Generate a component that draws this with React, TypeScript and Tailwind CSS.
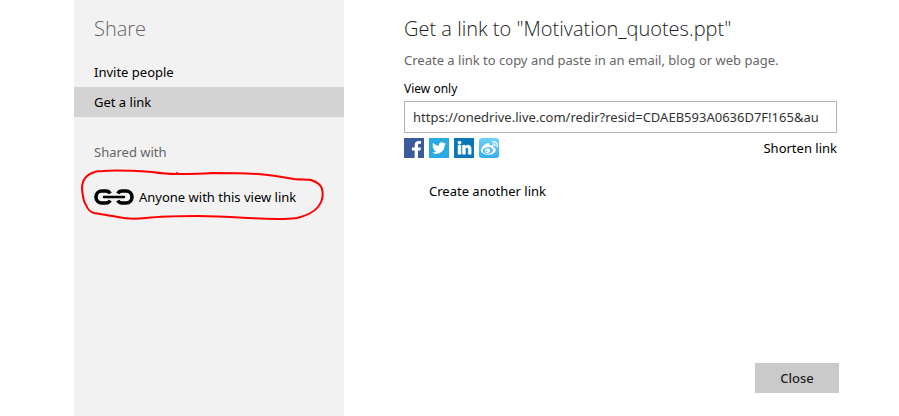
import { useState } from "react";
import { FaFacebookF, FaLinkedinIn, FaTwitter, FaWeibo } from "react-icons/fa";

const shareTargets = [
  { name: "Facebook", icon: FaFacebookF, box: "bg-[#3b5a9a] items-end justify-end pr-[2px]", glyph: "h-[17px] w-[11px]" },
  { name: "Twitter", icon: FaTwitter, box: "bg-[#2ba9e1] items-center justify-center", glyph: "size-[14px]" },
  { name: "LinkedIn", icon: FaLinkedinIn, box: "bg-[#0a76b5] items-center justify-center", glyph: "size-[15px] stroke-white stroke-[24px]" },
  { name: "Weibo", icon: FaWeibo, box: "rounded-[3px] bg-linear-to-b from-[#6fd0fb] to-[#32aef0] items-center justify-center", glyph: "size-[17px]" },
];

const menuItems = ["Invite people", "Get a link"];

export default function App() {
  const [active, setActive] = useState("Get a link");
  const [url, setUrl] = useState("https://onedrive.live.com/redir?resid=CDAEB593A0636D7F!165&authkey=!AJ7");

  return (
    <div className="flex min-h-screen bg-white pl-[74px] pr-[60px] font-['Noto_Sans',sans-serif] text-[13px] leading-5 text-black">
      <aside className="w-[270px] shrink-0 bg-[#f2f2f2]">
        <h2 className="px-5 pb-[13px] pt-[14px] font-['Open_Sans',sans-serif] text-xl leading-[30px] font-light text-[#666]">Share</h2>
        <nav>
          {menuItems.map((item) => (
            <button
              key={item}
              onClick={() => setActive(item)}
              className={`block h-[30px] w-full px-5 text-left ${active === item ? "bg-[#d3d3d3]" : ""}`}
            >
              {item}
            </button>
          ))}
        </nav>
        <h3 className="mt-[25px] px-5 text-[#666]">Shared with</h3>
        <div className="relative mx-5 mt-5 flex h-[30px] items-center">
          <a href="#view-link" className="flex items-center gap-[5px]">
            <ChainIcon />
            Anyone with this view link
          </a>
          <HandDrawnLoop />
        </div>
      </aside>

      <main className="flex min-w-0 flex-1 flex-col pl-[60px]">
        <h1 className="pt-[14px] font-['Open_Sans',sans-serif] text-xl leading-[30px] font-light text-[#222]">Get a link to "Motivation_quotes.ppt"</h1>
        <p className="mt-[6px] text-[#666]">Create a link to copy and paste in an email, blog or web page.</p>
        <div className="mr-[2px]">
          <label htmlFor="share-url" className="mt-[9px] block text-xs leading-5">View only</label>
          <input
            id="share-url"
            type="text"
            value={url}
            onChange={(e) => setUrl(e.target.value)}
            className="mt-[2px] block h-8 w-full border border-[#b4b4b4] bg-white pl-2 pr-[18px] text-[#333] outline-none"
          />
          <div className="mt-[5px] flex items-center justify-between">
            <div className="flex gap-[5px]">
              {shareTargets.map(({ name, icon: Icon, box, glyph }) => (
                <button key={name} aria-label={name} className={`flex size-5 text-white ${box}`}>
                  <Icon className={glyph} />
                </button>
              ))}
            </div>
            <button>Shorten link</button>
          </div>
        </div>
        <button className="ml-[25px] mt-[23px] self-start">Create another link</button>
        <button className="mb-[23px] mt-auto h-[30px] w-[84px] self-end bg-[#cacaca] font-medium text-[#222]">Close</button>
      </main>
    </div>
  );
}

function ChainIcon() {
  return (
    <svg viewBox="0 0 40 16" className="h-4 w-10 shrink-0" fill="none" stroke="#000" strokeWidth="3.6" aria-hidden="true">
      <path d="M16.200 4.500C15.200 2.700 14 2 12 2H8C4.500 2 2 4.700 2 8s2.500 6 6 6h4c2 0 3.200-.7 4.200-2.500" />
      <path d="M23.800 4.500C24.800 2.700 26 2 28 2h4c3.500 0 6 2.700 6 6s-2.500 6-6 6h-4c-2 0-3.200-.7-4.200-2.500" />
      <path d="M10 8h20" strokeWidth="2.500" strokeLinecap="round" />
    </svg>
  );
}

// red marker loop around the shared link
function HandDrawnLoop() {
  return (
    <svg
      viewBox="0 0 242 50"
      className="pointer-events-none absolute -left-3 -top-3 h-[50px] w-[242px] max-w-none overflow-visible"
      fill="none"
      stroke="#f00"
      strokeWidth="2"
      strokeLinejoin="round"
      aria-hidden="true"
    >
      <path d="M13 2C5 4 0 9 0 19C1 26 1 31 4 35C6 40 8 42 12 43C20 44 27 46 36 47C44 49 54 49 64 48C82 46 100 46 116 46C135 46 150 47 168 48C182 49 200 50 215 48C223 46 232 42 236 37C240 32 242 27 240 19C239 15 235 12 229 10C224 9 219 10 212 9C201 7 190 5 176 4C158 3 145 3 130 3C118 4 106 4 96 4L95 3L94 4C84 4 77 3 70 2C54 1 34 0 21 1C18 1 15 1 13 2" />
    </svg>
  );
}
